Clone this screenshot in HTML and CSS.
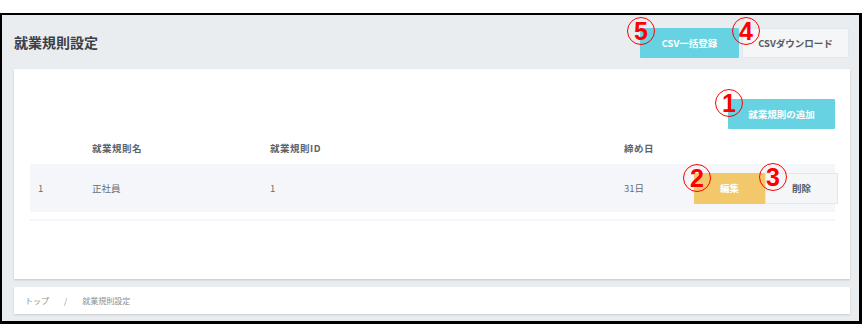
FILE: index.html
```html
<!DOCTYPE html>
<html lang="ja">
<head>
<meta charset="utf-8">
<title>就業規則設定</title>
<link rel="stylesheet" href="styles.css">
</head>
<body>
<div class="frame">
  <header class="page-header">
    <h1 class="page-title">就業規則設定</h1>
    <div class="header-actions">
      <button class="btn btn-cyan btn-csv-up">CSV一括登録</button>
      <button class="btn btn-light btn-csv-down">CSVダウンロード</button>
    </div>
  </header>

  <section class="card">
    <div class="card-actions">
      <button class="btn btn-cyan btn-add">就業規則の追加</button>
    </div>
    <div class="table">
      <div class="trow thead">
        <div></div>
        <div>就業規則名</div>
        <div>就業規則ID</div>
        <div>締め日</div>
        <div></div>
      </div>
      <div class="trow tbody">
        <div class="cell-num">1</div>
        <div>正社員</div>
        <div>1</div>
        <div>31日</div>
        <div class="row-actions">
          <button class="btn btn-yellow btn-edit">編集</button>
          <button class="btn btn-light btn-del">削除</button>
        </div>
      </div>
      <div class="tfoot-line"></div>
    </div>
  </section>

  <nav class="breadcrumb">
    <span>トップ</span>
    <span class="sep">/</span>
    <span>就業規則設定</span>
  </nav>

  <span class="mark m5">5</span>
  <span class="mark m4">4</span>
  <span class="mark m1">1</span>
  <span class="mark m2">2</span>
  <span class="mark m3">3</span>
</div>
</body>
</html>
```

FILE: styles.css
```css
* { box-sizing: border-box; }
html, body { margin: 0; padding: 0; background: #ffffff; }
body {
  font-family: "Noto Sans CJK JP", "Noto Sans", "Liberation Sans", sans-serif;
  width: 862px;
  height: 324px;
  overflow: hidden;
}

.frame {
  position: relative;
  margin-top: 13px;
  height: 311px;
  border-style: solid;
  border-color: #000;
  border-width: 2px 3px 3px 2px;
  background: #e9edf0;
  padding: 0 9px 0 12px;
  display: flex;
  flex-direction: column;
}

.page-header {
  height: 54px;
  display: flex;
  align-items: center;
  justify-content: space-between;
}
.page-title {
  margin: 0;
  font-size: 14px;
  font-weight: 700;
  color: #3b4046;
  letter-spacing: 0;
}
.header-actions {
  display: flex;
  gap: 3px;
  margin-right: 1px;
  padding-top: 1px;
}

.btn {
  font-family: inherit;
  border: none;
  font-size: 9.5px;
  font-weight: 700;
  padding: 0;
  margin: 0;
  display: flex;
  align-items: center;
  justify-content: center;
  cursor: pointer;
}
.btn-cyan { background: #67d2e1; color: #fff; border-radius: 1px; }
.btn-light { background: #f5f6f8; color: #555b62; border: 1px solid #e4e7eb; }
.btn-yellow { background: #f2c86a; color: #fff; }

.btn-csv-up { width: 99px; height: 30px; }
.btn-csv-down { width: 107px; height: 30px; }
.btn-add { width: 107px; height: 30px; }
.btn-edit { width: 71px; height: 31px; }
.btn-del { width: 73px; height: 31px; }

.card {
  background: #fff;
  height: 210px;
  box-shadow: 0 1px 2px rgba(0,0,0,0.16);
  padding: 30px 15px 0 16px;
}
.card-actions {
  display: flex;
  justify-content: flex-end;
}

.table { font-size: 9.5px; }
.trow {
  display: grid;
  grid-template-columns: 62px 178px 354px 70px 1fr;
  align-items: center;
}
.thead {
  padding: 12px 0 8px;
  line-height: 15px;
  font-weight: 700;
  color: #5d6369;
  letter-spacing: 0.5px;
}
.tbody {
  height: 48px;
  background: #f4f6f9;
  color: #666c72;
}
.cell-num { padding-left: 8px; }
.row-actions { display: flex; }
.tfoot-line {
  margin-top: 7px;
  height: 2px;
  background: #f4f6f9;
}

.breadcrumb {
  margin-top: 8px;
  height: 27px;
  background: #fff;
  box-shadow: 0 1px 2px rgba(0,0,0,0.14);
  display: flex;
  align-items: center;
  padding-left: 11px;
  font-size: 8px;
  color: #8a8f95;
  gap: 13px;
}
.breadcrumb .sep { margin: 0 2px; }

.mark {
  position: absolute;
  width: 28px;
  height: 28px;
  border: 1.5px solid #ff0000;
  border-radius: 50%;
  color: #ff0000;
  font-family: "Liberation Sans", "DejaVu Sans", sans-serif;
  font-weight: 700;
  font-size: 25px;
  line-height: 25px;
  display: flex;
  align-items: center;
  justify-content: center;
}
.m5 { left: 625px; top: 2px; }
.m4 { left: 730px; top: 2px; }
.m1 { left: 713px; top: 74px; }
.m2 { left: 681px; top: 149px; }
.m3 { left: 757px; top: 148px; }
```
